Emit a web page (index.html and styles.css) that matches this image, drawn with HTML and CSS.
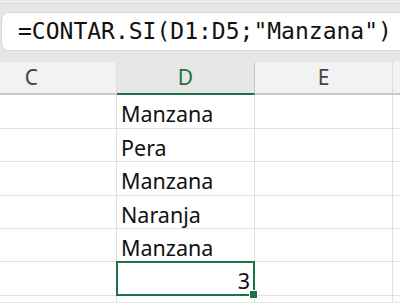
FILE: index.html
```html
<!DOCTYPE html>
<html lang="es">

<head>
  <meta charset="UTF-8">
  <meta name="viewport" content="width=device-width, initial-scale=1.0">
  <title>CONTAR.SI</title>
  <link rel="stylesheet" href="styles.css">
</head>

<body>
  <div class="topline"></div>
  <div class="bar-wrap">
    <div class="formula-bar">=CONTAR.SI(D1:D5;"Manzana")</div>
  </div>

  <div class="sheet-wrap">
    <div class="sheet">
      <div class="head">C</div>
      <div class="head active">D</div>
      <div class="head">E</div>
      <div class="head"></div>

      <div class="cell"></div><div class="cell">Manzana</div><div class="cell"></div><div class="cell"></div>
      <div class="cell"></div><div class="cell">Pera</div><div class="cell"></div><div class="cell"></div>
      <div class="cell"></div><div class="cell">Manzana</div><div class="cell"></div><div class="cell"></div>
      <div class="cell"></div><div class="cell">Naranja</div><div class="cell"></div><div class="cell"></div>
      <div class="cell"></div><div class="cell">Manzana</div><div class="cell"></div><div class="cell"></div>
      <div class="cell"></div><div class="cell num selected">3</div><div class="cell"></div><div class="cell"></div>
      <div class="cell"></div><div class="cell"></div><div class="cell"></div><div class="cell"></div>
    </div>
  </div>
</body>

</html>
```

FILE: styles.css
```css
* {
  margin: 0;
  padding: 0;
  box-sizing: border-box;
}

body {
  width: 400px;
  height: 303px;
  overflow: hidden;
  background: #e6e6e6;
  font-family: "Noto Sans", "Open Sans", sans-serif;
}

.topline {
  height: 4px;
  background: #ececec;
  border-bottom: 1px solid #d8d8d8;
}

.bar-wrap {
  padding: 8px 0 0 1px;
  overflow: hidden;
}

.formula-bar {
  width: 420px;
  height: 39px;
  padding-left: 16px;
  background: #fff;
  border: 1px solid #d9d9d9;
  border-radius: 8px;
  font-family: "DejaVu Sans Mono", monospace;
  font-size: 23px;
  line-height: 37px;
  color: #111;
  white-space: nowrap;
}

.sheet-wrap {
  margin-top: 11px;
  height: 240px;
  overflow: hidden;
}

.sheet {
  display: grid;
  margin-left: -53px;
  grid-template-columns: 170px 138px 138px 100px;
  grid-template-rows: 33px 34px 33px 34px 33px 33px 34px 40px;
  background: #fff;
}

.head {
  background: #f2f2f2;
  border-right: 1px solid #dcdcdc;
  border-bottom: 2px solid #c9c9c9;
  text-align: center;
  font-size: 21px;
  line-height: 31px;
  color: #444;
}

.head.active {
  background: #e6e6e6;
  color: #1e7145;
  border-bottom-color: #1e7145;
  border-right-color: #c4c4c4;
}

.cell {
  border-right: 1px solid #e1e1e1;
  border-bottom: 1px solid #e1e1e1;
  padding: 4px 4px 0;
  font-size: 21.5px;
  line-height: 29px;
  color: #111;
}

.num {
  text-align: right;
}

.selected {
  position: relative;
}

.selected::after {
  content: "";
  position: absolute;
  inset: -1px -1px -1px -1px;
  border: 2px solid #1e7145;
}

.selected::before {
  content: "";
  position: absolute;
  right: -4px;
  bottom: -4px;
  width: 7px;
  height: 7px;
  background: #1e7145;
  border: 1px solid #fff;
  z-index: 1;
}
```
